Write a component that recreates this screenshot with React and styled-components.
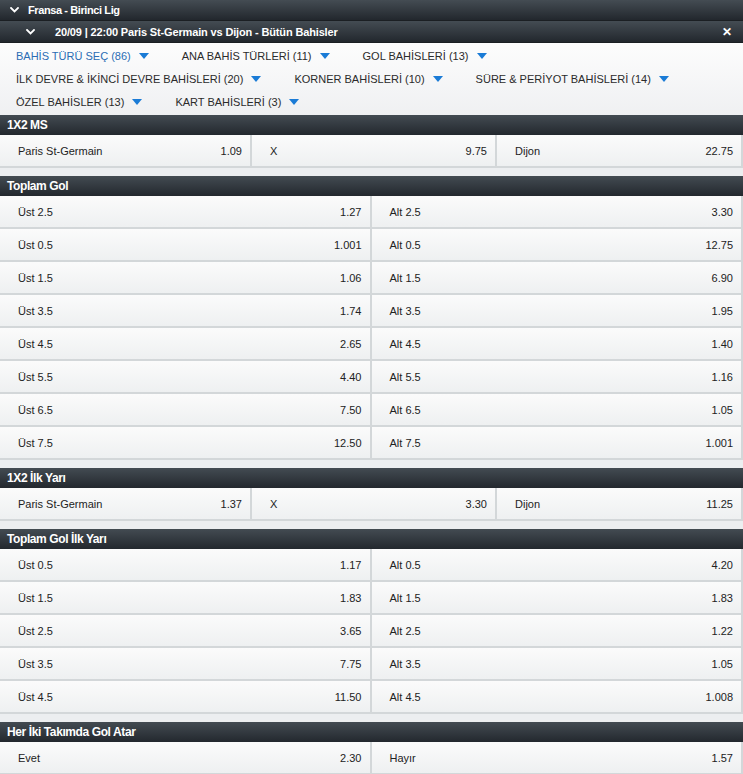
import React from "react";
import styled, { createGlobalStyle } from "styled-components";

const GlobalStyle = createGlobalStyle`
  html, body { margin: 0; padding: 0; }
  body {
    background: #eceef0;
    font-family: "Liberation Sans", Arial, sans-serif;
    font-size: 11px;
    color: #222;
  }
  * { box-sizing: border-box; }
`;

const Page = styled.div`
  width: 743px;
  display: flex;
  flex-direction: column;
`;

const DarkBar = styled.div`
  height: ${(p) => p.$h}px;
  display: flex;
  align-items: center;
  padding-left: ${(p) => p.$pl}px;
  padding-right: 10px;
  background: linear-gradient(#444c53, #22272d);
  color: #fff;
  font-weight: bold;
  font-size: 11px;
  border-bottom: 1px solid #1b1f23;
`;

const BarTitle = styled.span`
  margin-left: ${(p) => p.$ml}px;
  letter-spacing: ${(p) => p.$ls}px;
  flex: 1;
  white-space: nowrap;
`;

const Close = styled.span`
  font-size: 12px;
  font-weight: bold;
  line-height: 1;
  margin-right: 1px;
`;

const FilterPanel = styled.div`
  display: flex;
  flex-wrap: wrap;
  padding: 1px 16px 2px;
  background: linear-gradient(#fdfdfd, #eff0f2);
`;

const FilterItem = styled.div`
  display: flex;
  align-items: center;
  height: 23px;
  margin-right: 33px;
  color: ${(p) => (p.$active ? "#2a6cb4" : "#2b2b2b")};
  font-size: 11px;
  white-space: nowrap;
`;

const Tri = styled.span`
  display: inline-block;
  width: 0;
  height: 0;
  margin-left: 8px;
  border-left: 5px solid transparent;
  border-right: 5px solid transparent;
  border-top: 6px solid #1a7bd6;
`;

const Section = styled.div`
  margin-bottom: 8px;
`;

const Header = styled.div`
  height: 20px;
  display: flex;
  align-items: center;
  padding-left: 7px;
  background: linear-gradient(#434b52, #23282e);
  color: #fff;
  font-weight: bold;
  font-size: 12px;
  letter-spacing: -0.4px;
`;

const Grid = styled.div`
  display: grid;
  grid-template-columns: ${(p) => p.$cols};
`;

const Cell = styled.div`
  height: 33px;
  display: flex;
  align-items: center;
  justify-content: space-between;
  padding: 0 8px 0 18px;
  background: linear-gradient(#fbfbfb, #eef0f1);
  border-right: 2px solid #d3d7d9;
  border-bottom: 2px solid #d3d7d9;
  color: #222;
  font-size: 11px;
`;

const Chevron = ({ size = 9 }) => (
  <svg width={size} height={6} viewBox="0 0 9 6" fill="none">
    <path d="M1 1 L4.5 4.5 L8 1" stroke="#fff" strokeWidth="1.8" strokeLinecap="square" />
  </svg>
);

const filters = [
  { label: "BAHİS TÜRÜ SEÇ (86)", active: true },
  { label: "ANA BAHİS TÜRLERİ (11)" },
  { label: "GOL BAHİSLERİ (13)" },
  { label: "İLK DEVRE & İKİNCİ DEVRE BAHİSLERİ (20)" },
  { label: "KORNER BAHİSLERİ (10)" },
  { label: "SÜRE & PERİYOT BAHİSLERİ (14)" },
  { label: "ÖZEL BAHİSLER (13)" },
  { label: "KART BAHİSLERİ (3)" },
];

const sections = [
  {
    title: "1X2 MS",
    cols: "252px 245px 1fr",
    cells: [
      ["Paris St-Germain", "1.09"],
      ["X", "9.75"],
      ["Dijon", "22.75"],
    ],
  },
  {
    title: "Toplam Gol",
    cols: "1fr 1fr",
    cells: [
      ["Üst 2.5", "1.27"], ["Alt 2.5", "3.30"],
      ["Üst 0.5", "1.001"], ["Alt 0.5", "12.75"],
      ["Üst 1.5", "1.06"], ["Alt 1.5", "6.90"],
      ["Üst 3.5", "1.74"], ["Alt 3.5", "1.95"],
      ["Üst 4.5", "2.65"], ["Alt 4.5", "1.40"],
      ["Üst 5.5", "4.40"], ["Alt 5.5", "1.16"],
      ["Üst 6.5", "7.50"], ["Alt 6.5", "1.05"],
      ["Üst 7.5", "12.50"], ["Alt 7.5", "1.001"],
    ],
  },
  {
    title: "1X2 İlk Yarı",
    cols: "252px 245px 1fr",
    cells: [
      ["Paris St-Germain", "1.37"],
      ["X", "3.30"],
      ["Dijon", "11.25"],
    ],
  },
  {
    title: "Toplam Gol İlk Yarı",
    cols: "1fr 1fr",
    cells: [
      ["Üst 0.5", "1.17"], ["Alt 0.5", "4.20"],
      ["Üst 1.5", "1.83"], ["Alt 1.5", "1.83"],
      ["Üst 2.5", "3.65"], ["Alt 2.5", "1.22"],
      ["Üst 3.5", "7.75"], ["Alt 3.5", "1.05"],
      ["Üst 4.5", "11.50"], ["Alt 4.5", "1.008"],
    ],
  },
  {
    title: "Her İki Takımda Gol Atar",
    cols: "1fr 1fr",
    cells: [
      ["Evet", "2.30"],
      ["Hayır", "1.57"],
    ],
  },
];

export default function App() {
  return (
    <>
      <GlobalStyle />
      <Page>
        <DarkBar $h={21} $pl={10}>
          <Chevron />
          <BarTitle $ml={9} $ls={-0.4}>Fransa - Birinci Lig</BarTitle>
        </DarkBar>
        <DarkBar $h={22} $pl={26}>
          <Chevron />
          <BarTitle $ml={20} $ls={-0.15}>20/09 | 22:00 Paris St-Germain vs Dijon - Bütün Bahisler</BarTitle>
          <Close>✕</Close>
        </DarkBar>
        <FilterPanel>
          {filters.map((f) => (
            <FilterItem key={f.label} $active={f.active}>
              {f.label}
              <Tri />
            </FilterItem>
          ))}
        </FilterPanel>
        {sections.map((s) => (
          <Section key={s.title}>
            <Header>{s.title}</Header>
            <Grid $cols={s.cols}>
              {s.cells.map(([name, odd], i) => (
                <Cell key={i}>
                  <span>{name}</span>
                  <span>{odd}</span>
                </Cell>
              ))}
            </Grid>
          </Section>
        ))}
      </Page>
    </>
  );
}
